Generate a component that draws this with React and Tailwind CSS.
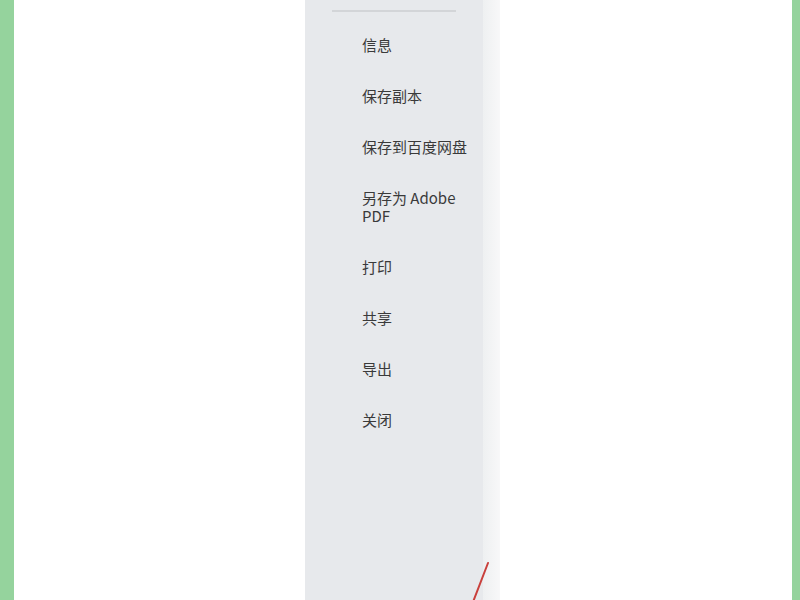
import React from 'react'

const items = [
    '信息',
    '保存副本',
    '保存到百度网盘',
    '另存为 Adobe PDF',
    '打印',
    '共享',
    '导出',
    '关闭',
]

export default function App() {
    return (
        <div className="relative flex h-[600px] w-[800px] overflow-hidden bg-white" style={{ fontFamily: '"Noto Sans CJK SC", "Noto Sans", sans-serif' }}>
            <div className="w-[14px] bg-[#95d39d]" />
            <div className="flex flex-1 bg-white">
                <div className="ml-[291px] flex w-[178px] flex-col bg-[#e7e9ec]">
                    <div className="mx-[27px] mt-[10px] h-[2px] bg-[#d3d5d8]" />
                    <ul className="mt-[24px] flex flex-col gap-[33px] pl-[57px] pr-4">
                        {items.map((item) => (
                            <li key={item} className="text-[15px] leading-[18px] text-[#3a3a3a]">
                                {item}
                            </li>
                        ))}
                    </ul>
                </div>
                <div className="w-[17px] bg-gradient-to-r from-[#eef0f1] to-[#f8f8f9]" />
            </div>
            <div className="w-[8px] bg-[#95d39d]" />

            {/* red annotation line */}
            <svg className="absolute left-0 top-0" width="800" height="600">
                <line x1="488" y1="563" x2="473" y2="602" stroke="#c9403c" strokeWidth="2" strokeLinecap="round" />
            </svg>
        </div>
    )
}
